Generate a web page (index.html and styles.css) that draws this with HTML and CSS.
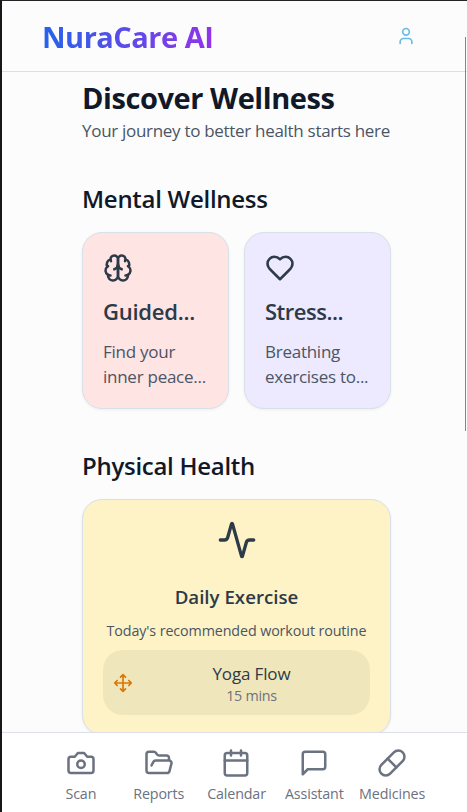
FILE: index.html
```html
<!DOCTYPE html>
<html lang="en">
<head>
<meta charset="utf-8">
<title>NuraCare AI</title>
<link rel="stylesheet" href="styles.css">
</head>
<body>
<div class="app">
  <header class="header">
    <div class="logo">NuraCare AI</div>
    <svg class="icon user" viewBox="0 0 24 24"><path d="M19 21v-2a4 4 0 0 0-4-4H9a4 4 0 0 0-4 4v2"/><circle cx="12" cy="7" r="4"/></svg>
  </header>
  <main class="main">
    <h1>Discover Wellness</h1>
    <p class="subtitle">Your journey to better health starts here</p>
    <h2>Mental Wellness</h2>
    <div class="grid">
      <article class="card pink">
        <svg class="icon" viewBox="0 0 24 24"><path d="M12 5a3 3 0 1 0-5.997.125 4 4 0 0 0-2.526 5.77 4 4 0 0 0 .556 6.588A4 4 0 1 0 12 18Z"/><path d="M12 5a3 3 0 1 1 5.997.125 4 4 0 0 1 2.526 5.77 4 4 0 0 1-.556 6.588A4 4 0 1 1 12 18Z"/><path d="M15 13a4.5 4.5 0 0 1-3-4 4.500 4.500 0 0 1-3 4"/><path d="M17.599 6.500a3 3 0 0 0 .399-1.375"/><path d="M6.003 5.125A3 3 0 0 0 6.401 6.500"/><path d="M3.477 10.896a4 4 0 0 1 .585-.396"/><path d="M19.938 10.500a4 4 0 0 1 .585.396"/><path d="M6 18a4 4 0 0 1-1.967-.516"/><path d="M19.967 17.484A4 4 0 0 1 18 18"/></svg>
        <h3>Guided...</h3>
        <p>Find your<br>inner peace...</p>
      </article>
      <article class="card violet">
        <svg class="icon" viewBox="0 0 24 24"><path d="M19 14c1.490-1.460 3-3.210 3-5.500A5.500 5.500 0 0 0 16.500 3c-1.760 0-3 .5-4.500 2-1.500-1.500-2.740-2-4.500-2A5.500 5.500 0 0 0 2 8.500c0 2.300 1.500 4.050 3 5.500l7 7Z"/></svg>
        <h3 class="tight">Stress...</h3>
        <p>Breathing<br>exercises to...</p>
      </article>
    </div>
    <h2 class="second">Physical Health</h2>
    <article class="card exercise">
      <svg class="icon" viewBox="0 0 24 24"><path d="M22 12h-2.480a2 2 0 0 0-1.930 1.460l-2.350 8.360a.25.25 0 0 1-.48 0L9.240 2.180a.25.25 0 0 0-.48 0l-2.350 8.360A2 2 0 0 1 4.490 12H2"/></svg>
      <h3>Daily Exercise</h3>
      <p class="about">Today's recommended workout routine</p>
      <div class="routine">
        <svg class="icon" viewBox="0 0 24 24"><path d="M12 2v20M2 12h20M15 19l-3 3-3-3M19 9l3 3-3 3M5 9l-3 3 3 3M9 5l3-3 3 3"/></svg>
        <div class="routine-text">
          <div class="name">Yoga Flow</div>
          <div class="time">15 mins</div>
        </div>
      </div>
    </article>
  </main>
  <nav class="nav">
    <div class="tab"><svg class="icon" viewBox="0 0 24 24"><path d="M14.500 4h-5L7 7H4a2 2 0 0 0-2 2v9a2 2 0 0 0 2 2h16a2 2 0 0 0 2-2V9a2 2 0 0 0-2-2h-3l-2.500-3z"/><circle cx="12" cy="13" r="3"/></svg><span>Scan</span></div>
    <div class="tab"><svg class="icon" viewBox="0 0 24 24"><path d="m6 14 1.500-2.900A2 2 0 0 1 9.240 10H20a2 2 0 0 1 1.940 2.500l-1.540 6a2 2 0 0 1-1.950 1.500H4a2 2 0 0 1-2-2V5a2 2 0 0 1 2-2h3.900a2 2 0 0 1 1.690.9l.81 1.200a2 2 0 0 0 1.670.9H18a2 2 0 0 1 2 2v2"/></svg><span>Reports</span></div>
    <div class="tab"><svg class="icon" viewBox="0 0 24 24"><path d="M8 2v4M16 2v4M3 10h18"/><rect width="18" height="18" x="3" y="4" rx="2"/></svg><span>Calendar</span></div>
    <div class="tab"><svg class="icon" viewBox="0 0 24 24"><path d="M21 15a2 2 0 0 1-2 2H7l-4 4V5a2 2 0 0 1 2-2h14a2 2 0 0 1 2 2z"/></svg><span>Assistant</span></div>
    <div class="tab"><svg class="icon" viewBox="0 0 24 24"><path d="m10.500 20.500 10-10a4.950 4.950 0 1 0-7-7l-10 10a4.950 4.950 0 1 0 7 7Z"/><path d="m8.500 8.500 7 7"/></svg><span>Medicines</span></div>
  </nav>
  <div class="scrollbar"></div>
</div>
</body>
</html>
```
FILE: styles.css
```css
* { box-sizing: border-box; margin: 0; padding: 0; }

body {
  font-family: "Open Sans", "Noto Sans", sans-serif;
  background: #fcfcfc;
  overflow: hidden;
}

.app {
  position: relative;
  display: flex;
  flex-direction: column;
  width: 467px;
  height: 812px;
  overflow: hidden;
  border-left: 2px solid #17171b;
  border-top: 1px solid #252328;
}

.icon {
  display: block;
  flex: none;
  width: 30px;
  height: 30px;
  fill: none;
  stroke: currentColor;
  stroke-width: 2;
  stroke-linecap: round;
  stroke-linejoin: round;
}

.header {
  flex: none;
  display: flex;
  align-items: center;
  justify-content: space-between;
  height: 71px;
  padding: 0 51px 0 40px;
  border-bottom: 1px solid #dcdfe8;
}

.logo {
  padding-top: 1px;
  font-size: 29px;
  font-weight: 700;
  line-height: 40px;
  letter-spacing: -0.5px;
  white-space: nowrap;
  color: transparent;
  background: linear-gradient(90deg, #2563eb, #9333ea);
  background-clip: text;
  -webkit-background-clip: text;
}

.user { width: 20px; height: 20px; color: #6bbbe3; }

.main {
  flex: 1;
  min-height: 0;
  overflow: hidden;
  padding: 6px 76px 0 80px;
}

h1 {
  font-size: 29px;
  line-height: 40px;
  font-weight: 700;
  letter-spacing: -0.43px;
  white-space: nowrap;
  color: #111827;
}

.subtitle {
  font-size: 17px;
  line-height: 25px;
  letter-spacing: -0.3px;
  white-space: nowrap;
  color: #4b5563;
}

h2 {
  margin: 40px 0 17px;
  font-size: 24px;
  line-height: 32px;
  font-weight: 600;
  letter-spacing: -0.28px;
  white-space: nowrap;
  color: #111827;
}

h2.second { margin-top: 41px; }

.grid { display: grid; grid-template-columns: 1fr 1fr; gap: 15px; }

.card {
  padding: 20px 20px 19px;
  border: 1px solid #d8e0e8;
  border-radius: 20px;
  box-shadow: 0 1px 3px rgba(0, 0, 0, 0.06);
  color: #2d3a47;
}

.pink { background: #ffe4e4; }
.violet { background: #ede9fe; }

.card h3 {
  margin: 13px 0 13px;
  font-size: 22px;
  line-height: 30px;
  font-weight: 600;
  letter-spacing: -0.25px;
}

.card h3.tight { letter-spacing: -0.5px; }

.card p {
  font-size: 17px;
  line-height: 25px;
  letter-spacing: -0.26px;
  white-space: nowrap;
  color: #4b5563;
}

.card.exercise {
  display: flex;
  flex-direction: column;
  align-items: center;
  background: #fef2c7;
}

.exercise > .icon { width: 40px; height: 40px; }

.card.exercise h3 {
  margin: 23px 0 10px;
  font-size: 18.7px;
  line-height: 28px;
  letter-spacing: 0;
}

.card .about {
  font-size: 14.3px;
  line-height: 20px;
  letter-spacing: -0.11px;
}

.routine {
  display: flex;
  align-items: center;
  gap: 10px;
  align-self: stretch;
  height: 65px;
  margin-top: 9px;
  padding: 0 10px;
  border-radius: 20px;
  background: #f0e6bb;
}

.routine .icon { width: 20px; height: 20px; color: #d97706; }
.routine-text { flex: 1; padding-top: 2px; text-align: center; }
.name { font-size: 17px; line-height: 25px; letter-spacing: -0.15px; }
.time { font-size: 14.3px; line-height: 20px; letter-spacing: -0.25px; color: #6b7280; }

.nav {
  flex: none;
  display: grid;
  grid-template-columns: repeat(5, 1fr);
  height: 80px;
  padding: 15px 36px 0 40px;
  border-top: 1px solid #dcdfe8;
  background: #fff;
  color: #6b7280;
}

.tab {
  display: flex;
  flex-direction: column;
  align-items: center;
  gap: 6px;
  font-size: 14.3px;
  line-height: 20px;
  letter-spacing: -0.15px;
}

.scrollbar {
  position: absolute;
  top: 36px;
  right: 1px;
  width: 1px;
  height: 394px;
  background: #858585;
}
```
